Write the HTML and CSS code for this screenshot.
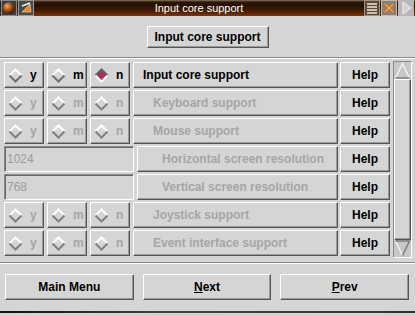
FILE: index.html
```html
<!DOCTYPE html>
<html>
<head>
    <title>Input core support</title>
    <link rel="stylesheet" href="styles.css">
</head>
<body>
    <div class="titlebar">
        <div class="tb-icons">
            <svg class="tb-icon" width="16" height="16" viewBox="0 0 16 16">
                <defs>
                    <radialGradient id="ball" cx="0.35" cy="0.35" r="0.7">
                        <stop offset="0" stop-color="#f0b070"/>
                        <stop offset="0.5" stop-color="#a05018"/>
                        <stop offset="1" stop-color="#3a1404"/>
                    </radialGradient>
                </defs>
                <rect x="0" y="0" width="16" height="16" fill="#3c3c3c"/>
                <rect x="0.5" y="0.5" width="15" height="15" fill="none" stroke="#8a8a8a"/>
                <circle cx="8" cy="8" r="6" fill="url(#ball)"/>
            </svg>
            <svg class="tb-icon" width="16" height="16" viewBox="0 0 16 16">
                <rect x="0" y="0" width="16" height="16" fill="#4a4a4a"/>
                <rect x="0.5" y="0.5" width="15" height="15" fill="none" stroke="#9a9a9a"/>
                <path d="M4 6 L12 3" stroke="#f0f0f0" stroke-width="1.5"/>
                <path d="M12 4 L4 12 L13 12 Z" fill="#e08a30" stroke="#f4c080" stroke-width="0.8"/>
            </svg>
        </div>
        <div class="tb-title">Input core support</div>
        <div class="tb-icons">
            <svg class="tb-icon" width="16" height="16" viewBox="0 0 16 16">
                <rect x="0" y="0" width="16" height="16" fill="#5a4a3a"/>
                <rect x="0.5" y="0.5" width="15" height="15" fill="none" stroke="#a09080"/>
                <path d="M3 4 H13 M3 7 H13 M3 10 H13 M3 13 H13" stroke="#f4e8d8" stroke-width="1.4"/>
            </svg>
            <svg class="tb-icon" width="16" height="16" viewBox="0 0 16 16">
                <rect x="0" y="0" width="16" height="16" fill="#8a8078"/>
                <rect x="0.5" y="0.5" width="15" height="15" fill="none" stroke="#c0b8b0"/>
                <path d="M4 4 L12 12 M12 4 L4 12" stroke="#e07820" stroke-width="2.6"/>
                <path d="M4 4 L12 12 M12 4 L4 12" stroke="#f8c080" stroke-width="0.8"/>
            </svg>
            <svg class="tb-icon" width="16" height="16" viewBox="0 0 16 16">
                <rect x="0" y="0" width="16" height="16" fill="#b8b8b8"/>
                <path d="M5 2 L13 8 L5 14 Z" fill="#d0d0d0" stroke="#f0f0f0" stroke-width="1"/>
            </svg>
        </div>
    </div>

    <div class="header">
        <button class="raised top-btn">Input core support</button>
    </div>
    <div class="sep"></div>

    <div class="main">
        <div class="rows">
            <div class="row">
                <div class="raised radio"><svg class="dia" width="15" height="15" viewBox="0 0 15 15"><path d="M1.5 7.5 L7.5 1.5 L13.5 7.5" fill="none" stroke="#ffffff" stroke-width="2"/><path d="M1.5 7.5 L7.5 13.5 L13.5 7.5" fill="none" stroke="#707070" stroke-width="2"/></svg><span>y</span></div>
                <div class="raised radio"><svg class="dia" width="15" height="15" viewBox="0 0 15 15"><path d="M1.5 7.5 L7.5 1.5 L13.5 7.5" fill="none" stroke="#ffffff" stroke-width="2"/><path d="M1.5 7.5 L7.5 13.5 L13.5 7.5" fill="none" stroke="#707070" stroke-width="2"/></svg><span>m</span></div>
                <div class="raised radio"><svg class="dia" width="15" height="15" viewBox="0 0 15 15"><path d="M1.5 7.5 L7.5 1.5 L13.5 7.5 L7.5 13.5 Z" fill="#b02a58"/><path d="M1.5 7.5 L7.5 1.5 L13.5 7.5" fill="none" stroke="#606060" stroke-width="2"/><path d="M1.5 7.5 L7.5 13.5 L13.5 7.5" fill="none" stroke="#ffffff" stroke-width="2"/></svg><span>n</span></div>
                <div class="raised label lvl1">Input core support</div>
                <button class="raised help">Help</button>
            </div>
            <div class="row off">
                <div class="raised radio"><svg class="dia" width="15" height="15" viewBox="0 0 15 15"><path d="M1.5 7.5 L7.5 1.5 L13.5 7.5" fill="none" stroke="#ffffff" stroke-width="2"/><path d="M1.5 7.5 L7.5 13.5 L13.5 7.5" fill="none" stroke="#808080" stroke-width="2"/></svg><span>y</span></div>
                <div class="raised radio"><svg class="dia" width="15" height="15" viewBox="0 0 15 15"><path d="M1.5 7.5 L7.5 1.5 L13.5 7.5" fill="none" stroke="#ffffff" stroke-width="2"/><path d="M1.5 7.5 L7.5 13.5 L13.5 7.5" fill="none" stroke="#808080" stroke-width="2"/></svg><span>m</span></div>
                <div class="raised radio"><svg class="dia" width="15" height="15" viewBox="0 0 15 15"><path d="M1.5 7.5 L7.5 1.5 L13.5 7.5" fill="none" stroke="#ffffff" stroke-width="2"/><path d="M1.5 7.5 L7.5 13.5 L13.5 7.5" fill="none" stroke="#808080" stroke-width="2"/></svg><span>n</span></div>
                <div class="raised label lvl2">Keyboard support</div>
                <button class="raised help">Help</button>
            </div>
            <div class="row off">
                <div class="raised radio"><svg class="dia" width="15" height="15" viewBox="0 0 15 15"><path d="M1.5 7.5 L7.5 1.5 L13.5 7.5" fill="none" stroke="#ffffff" stroke-width="2"/><path d="M1.5 7.5 L7.5 13.5 L13.5 7.5" fill="none" stroke="#808080" stroke-width="2"/></svg><span>y</span></div>
                <div class="raised radio"><svg class="dia" width="15" height="15" viewBox="0 0 15 15"><path d="M1.5 7.5 L7.5 1.5 L13.5 7.5" fill="none" stroke="#ffffff" stroke-width="2"/><path d="M1.5 7.5 L7.5 13.5 L13.5 7.5" fill="none" stroke="#808080" stroke-width="2"/></svg><span>m</span></div>
                <div class="raised radio"><svg class="dia" width="15" height="15" viewBox="0 0 15 15"><path d="M1.5 7.5 L7.5 1.5 L13.5 7.5" fill="none" stroke="#ffffff" stroke-width="2"/><path d="M1.5 7.5 L7.5 13.5 L13.5 7.5" fill="none" stroke="#808080" stroke-width="2"/></svg><span>n</span></div>
                <div class="raised label lvl2">Mouse support</div>
                <button class="raised help">Help</button>
            </div>
            <div class="row off">
                <div class="entry">1024</div>
                <div class="raised label wide lvl3">Horizontal screen resolution</div>
                <button class="raised help">Help</button>
            </div>
            <div class="row off">
                <div class="entry">768</div>
                <div class="raised label wide lvl3">Vertical screen resolution</div>
                <button class="raised help">Help</button>
            </div>
            <div class="row off">
                <div class="raised radio"><svg class="dia" width="15" height="15" viewBox="0 0 15 15"><path d="M1.5 7.5 L7.5 1.5 L13.5 7.5" fill="none" stroke="#ffffff" stroke-width="2"/><path d="M1.5 7.5 L7.5 13.5 L13.5 7.5" fill="none" stroke="#808080" stroke-width="2"/></svg><span>y</span></div>
                <div class="raised radio"><svg class="dia" width="15" height="15" viewBox="0 0 15 15"><path d="M1.5 7.5 L7.5 1.5 L13.5 7.5" fill="none" stroke="#ffffff" stroke-width="2"/><path d="M1.5 7.5 L7.5 13.5 L13.5 7.5" fill="none" stroke="#808080" stroke-width="2"/></svg><span>m</span></div>
                <div class="raised radio"><svg class="dia" width="15" height="15" viewBox="0 0 15 15"><path d="M1.5 7.5 L7.5 1.5 L13.5 7.5" fill="none" stroke="#ffffff" stroke-width="2"/><path d="M1.5 7.5 L7.5 13.5 L13.5 7.5" fill="none" stroke="#808080" stroke-width="2"/></svg><span>n</span></div>
                <div class="raised label lvl2">Joystick support</div>
                <button class="raised help">Help</button>
            </div>
            <div class="row off">
                <div class="raised radio"><svg class="dia" width="15" height="15" viewBox="0 0 15 15"><path d="M1.5 7.5 L7.5 1.5 L13.5 7.5" fill="none" stroke="#ffffff" stroke-width="2"/><path d="M1.5 7.5 L7.5 13.5 L13.5 7.5" fill="none" stroke="#808080" stroke-width="2"/></svg><span>y</span></div>
                <div class="raised radio"><svg class="dia" width="15" height="15" viewBox="0 0 15 15"><path d="M1.5 7.5 L7.5 1.5 L13.5 7.5" fill="none" stroke="#ffffff" stroke-width="2"/><path d="M1.5 7.5 L7.5 13.5 L13.5 7.5" fill="none" stroke="#808080" stroke-width="2"/></svg><span>m</span></div>
                <div class="raised radio"><svg class="dia" width="15" height="15" viewBox="0 0 15 15"><path d="M1.5 7.5 L7.5 1.5 L13.5 7.5" fill="none" stroke="#ffffff" stroke-width="2"/><path d="M1.5 7.5 L7.5 13.5 L13.5 7.5" fill="none" stroke="#808080" stroke-width="2"/></svg><span>n</span></div>
                <div class="raised label lvl2">Event interface support</div>
                <button class="raised help">Help</button>
            </div>
        </div>

        <div class="scrollbar">
            <svg class="arrow" width="17" height="17" viewBox="0 0 17 17">
                <path d="M1.5 16 L8.5 1.5 L15.5 16" fill="none" stroke="#f4f4f4" stroke-width="1.4"/>
                <path d="M1.5 16 H15.5" stroke="#7a7a7a" stroke-width="1.4"/>
            </svg>
            <div class="raised slider"></div>
            <svg class="arrow" width="17" height="17" viewBox="0 0 17 17">
                <path d="M1.5 1 L8.5 15.5" fill="none" stroke="#f4f4f4" stroke-width="1.4"/>
                <path d="M1.5 1 H15.5 L8.5 15.5" fill="none" stroke="#7a7a7a" stroke-width="1.4"/>
            </svg>
        </div>
    </div>

    <div class="sep low"></div>

    <div class="footer">
        <button class="raised foot-btn">Main Menu</button>
        <button class="raised foot-btn"><u>N</u>ext</button>
        <button class="raised foot-btn"><u>P</u>rev</button>
    </div>
    <div class="frame-bottom"></div>
</body>
</html>
```

FILE: styles.css
```css
body {
    font-family: 'Liberation Sans', Helvetica, Arial, sans-serif;
    background-color: #d5d5d5;
    color: #000000;
    margin: 0;
    padding: 0;
    width: 415px;
    height: 315px;
    overflow: hidden;
}
.titlebar {
    height: 16px;
    display: flex;
    align-items: center;
    background: linear-gradient(to bottom, #8a7866 0, #2c1608 2px, #241004 35%, #4a1e06 70%, #7a3410 100%);
}
.tb-icons {
    display: flex;
    gap: 1px;
    padding: 0 1px;
}
.tb-icon {
    display: block;
}
.tb-title {
    flex: 1;
    text-align: center;
    color: #ffffff;
    font-size: 11px;
    line-height: 16px;
}
.header {
    height: 41px;
    display: flex;
    justify-content: center;
    align-items: flex-start;
    padding-top: 10px;
    box-sizing: border-box;
}
.raised {
    background-color: #d5d5d5;
    border: 1px solid;
    border-color: #ffffff #555555 #555555 #ffffff;
    box-shadow: inset -1px -1px #999999;
    box-sizing: border-box;
    font-family: inherit;
    padding: 0;
    margin: 0;
}
.top-btn {
    width: 122px;
    height: 22px;
    font-size: 12px;
    font-weight: bold;
    color: #000000;
}
.sep {
    border-top: 1px solid #8a8a8a;
    border-bottom: 1px solid #ffffff;
}
.sep.low {
    margin-top: 4px;
}
.main {
    display: flex;
    padding: 3px 3px 0 4px;
}
.rows {
    display: flex;
    flex-direction: column;
    gap: 2px;
}
.row {
    display: flex;
    gap: 3px;
    height: 26px;
}
.radio {
    width: 40px;
    display: flex;
    align-items: center;
    padding-left: 3px;
    gap: 7px;
    font-size: 12px;
    font-weight: bold;
}
.dia {
    display: block;
    flex-shrink: 0;
}
.label {
    width: 205px;
    display: flex;
    align-items: center;
    font-size: 12px;
    font-weight: bold;
}
.label.wide {
    width: 201px;
}
.lvl1 {
    padding-left: 9px;
}
.lvl2 {
    padding-left: 19px;
}
.lvl3 {
    padding-left: 24px;
}
.help {
    width: 50px;
    margin-left: -1px;
    font-size: 12px;
    font-weight: bold;
    color: #000000;
}
.entry {
    width: 130px;
    box-sizing: border-box;
    border: 1px solid;
    border-color: #8a8a8a #ffffff #ffffff #8a8a8a;
    box-shadow: inset 1px 1px #666666;
    display: flex;
    align-items: center;
    padding-left: 2px;
    font-size: 12px;
    color: #9c9c9c;
}
.off .radio span,
.off .label {
    color: #a6a6a6;
}
.scrollbar {
    width: 19px;
    height: 197px;
    margin-top: -1px;
    margin-left: 3px;
    box-sizing: border-box;
    border: 1px solid;
    border-color: #8a8a8a #ffffff #ffffff #8a8a8a;
    background-color: #c8c8c8;
    display: flex;
    flex-direction: column;
}
.arrow {
    display: block;
}
.slider {
    flex: 1;
    width: 17px;
}
.footer {
    display: flex;
    gap: 9px;
    padding: 10px 6px 0 5px;
}
.foot-btn {
    flex: 1;
    height: 26px;
    font-size: 12px;
    font-weight: bold;
    color: #000000;
}
.frame-bottom {
    margin-top: 11px;
    height: 2px;
    background: linear-gradient(to right, #111111, #444444 40%, #333333);
}
```
